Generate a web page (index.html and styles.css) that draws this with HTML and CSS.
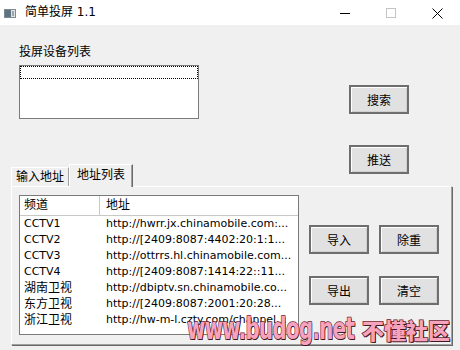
FILE: index.html
```html
<!DOCTYPE html>
<html lang="zh-CN">
<head>
    <meta charset="UTF-8">
    <meta name="viewport" content="width=device-width, initial-scale=1.0">
    <title>简单投屏 1.1</title>
    <link rel="stylesheet" href="styles.css">
</head>
<body>
    <div class="window">
        <div class="titlebar">
            <svg class="app-icon" width="12" height="9" viewBox="0 0 12 9">
                <rect x="0.5" y="0.5" width="11" height="8" fill="#dfe3e6" stroke="#7f8b93"/>
                <rect x="1" y="1" width="6" height="7" fill="#5d7480"/>
                <rect x="8" y="2" width="2" height="5" fill="#9aa7ae"/>
            </svg>
            <span class="title">简单投屏 1.1</span>
            <div class="controls">
                <span class="ctl">
                    <svg width="10" height="10" viewBox="0 0 10 10"><path d="M0 5.5h10" stroke="#000" stroke-width="1"/></svg>
                </span>
                <span class="ctl">
                    <svg width="10" height="10" viewBox="0 0 10 10"><rect x="0.5" y="0.5" width="9" height="9" fill="none" stroke="#c4c4c4"/></svg>
                </span>
                <span class="ctl">
                    <svg width="11" height="11" viewBox="0 0 11 11"><path d="M0.5 0.5l10 10M10.5 0.5l-10 10" stroke="#000" stroke-width="1"/></svg>
                </span>
            </div>
        </div>

        <div class="client">
            <div class="top">
                <div class="devices">
                    <div class="label">投屏设备列表</div>
                    <div class="listbox">
                        <div class="focus-row"></div>
                    </div>
                </div>
                <div class="side-buttons">
                    <button class="btn">搜索</button>
                    <button class="btn">推送</button>
                </div>
            </div>

            <div class="tabs">
                <div class="tab-strip">
                    <div class="tab">输入地址</div>
                    <div class="tab active">地址列表</div>
                </div>
                <div class="tab-panel">
                    <div class="listview">
                        <div class="lv-head">
                            <div class="col-name">频道</div>
                            <div class="col-url">地址</div>
                        </div>
                        <div id="rows" class="lv-body">
                            <!-- rows are added by the script below -->
                        </div>
                    </div>
                    <div class="panel-buttons">
                        <button class="btn">导入</button>
                        <button class="btn">除重</button>
                        <button class="btn">导出</button>
                        <button class="btn">清空</button>
                    </div>
                </div>
            </div>
        </div>

        <div class="watermark">
            <div class="wm-url-box"><span class="wm-url">www.budog.net</span></div>
            <span class="wm-cn">不懂社区</span>
        </div>
    </div>

    <script>
        const channels = [
            ['CCTV1', 'http://hwrr.jx.chinamobile.com:...'],
            ['CCTV2', 'http://[2409:8087:4402:20:1:1...'],
            ['CCTV3', 'http://ottrrs.hl.chinamobile.com...'],
            ['CCTV4', 'http://[2409:8087:1414:22::11...'],
            ['湖南卫视', 'http://dbiptv.sn.chinamobile.co...'],
            ['东方卫视', 'http://[2409:8087:2001:20:28...'],
            ['浙江卫视', 'http://hw-m-l.czty.com/channel...']
        ];

        const rows = document.getElementById('rows');
        channels.forEach(([name, url]) => {
            const row = document.createElement('div');
            row.classList.add('lv-row');
            const cn = /^[A-Z0-9]+$/.test(name) ? '' : ' cn';
            row.innerHTML = `
                <div class="col-name${cn}">${name}</div>
                <div class="col-url">${url}</div>
            `;
            rows.appendChild(row);
        });
    </script>
</body>
</html>
```

FILE: styles.css
```css
body {
    margin: 0;
    padding: 0;
    font-family: "DejaVu Sans", "Noto Sans CJK SC", sans-serif;
    font-size: 12px;
    color: #000;
    background: #f0f0f0;
}
.window {
    position: relative;
    width: 460px;
    height: 350px;
    overflow: hidden;
    background: #f0f0f0;
}
.titlebar {
    display: flex;
    align-items: center;
    height: 25px;
    background: #fff;
}
.app-icon {
    margin: 1px 9px 0 4px;
}
.title {
    font-size: 12px;
    line-height: 14px;
    margin-top: -1px;
}
.controls {
    display: flex;
    margin-left: auto;
    height: 25px;
}
.ctl {
    display: flex;
    align-items: center;
    justify-content: center;
    width: 46px;
    height: 25px;
    padding-top: 1px;
    box-sizing: border-box;
}
.client {
    padding-top: 20px;
}
.top {
    display: flex;
    align-items: flex-start;
    height: 119px;
    padding-left: 19px;
}
.devices {
    width: 180px;
}
.label {
    line-height: 14px;
    margin-bottom: 6px;
}
.listbox {
    height: 54px;
    box-sizing: border-box;
    border: 1px solid #7a7a7a;
    background: #fff;
}
.focus-row {
    height: 13px;
    border: 1px dotted #000;
    box-sizing: border-box;
}
.side-buttons {
    display: flex;
    flex-direction: column;
    gap: 31px;
    margin-left: 150px;
    padding-top: 40px;
}
.btn {
    width: 60px;
    height: 29px;
    padding: 0;
    border: 2px solid #6e6e6e;
    background: #e1e1e1;
    box-shadow: inset 1px 1px 0 #fff, inset -1px -1px 0 #cfcfcf;
    font-family: "Noto Sans CJK SC", sans-serif;
    font-size: 12px;
    line-height: 14px;
    color: #000;
}
.tabs {
    margin-left: 11px;
    width: 441px;
}
.tab-strip {
    display: flex;
    align-items: flex-end;
    height: 22px;
}
.tab {
    box-sizing: border-box;
    width: 58px;
    height: 19px;
    border-top: 1px solid #fff;
    border-left: 1px solid #fff;
    border-right: 1px solid #a0a0a0;
    text-align: center;
    line-height: 18px;
    font-size: 12px;
}
.tab.active {
    position: relative;
    z-index: 1;
    width: 64px;
    height: 23px;
    margin-bottom: -1px;
    line-height: 20px;
    background: #f0f0f0;
    border-right: 1px solid #696969;
    box-shadow: inset -1px 0 0 #a0a0a0;
}
.tab-panel {
    display: flex;
    align-items: flex-start;
    box-sizing: border-box;
    height: 159px;
    padding: 8px 0 0 7px;
    border-top: 1px solid #fff;
    border-left: 1px solid #fff;
    border-right: 1px solid #a0a0a0;
    border-bottom: 1px solid #a0a0a0;
    box-shadow: 1px 1px 0 #696969;
}
.listview {
    box-sizing: border-box;
    width: 280px;
    height: 140px;
    border: 1px solid #7a7a7a;
    background: #fff;
}
.lv-head {
    display: flex;
    height: 20px;
    box-sizing: border-box;
    border-bottom: 1px solid #c8c8c8;
    line-height: 19px;
    font-size: 12px;
}
.lv-head .col-name {
    border-right: 1px solid #c8c8c8;
}
.col-name {
    box-sizing: border-box;
    width: 80px;
    padding-left: 4px;
    white-space: nowrap;
}
.col-url {
    padding-left: 6px;
    white-space: nowrap;
    overflow: hidden;
}
.lv-row {
    display: flex;
    height: 16px;
    line-height: 16px;
    font-size: 11px;
}
.lv-row .col-name.cn {
    font-size: 12px;
}
.panel-buttons {
    display: grid;
    grid-template-columns: 60px 60px;
    column-gap: 10px;
    row-gap: 22px;
    margin-left: 10px;
    padding-top: 30px;
}
.watermark {
    position: absolute;
    left: 187px;
    top: 313px;
    display: flex;
    align-items: baseline;
    pointer-events: none;
}
.wm-url-box {
    width: 175px;
    white-space: nowrap;
}
.wm-url,
.wm-cn {
    color: #f7a3bd;
    -webkit-text-stroke: 1.5px #6b2233;
    paint-order: stroke fill;
    text-shadow: 1px 1px 0 #3a1a20;
    font-weight: 900;
}
.wm-url {
    display: inline-block;
    font-family: "DejaVu Sans", sans-serif;
    font-size: 30px;
    line-height: 32px;
    letter-spacing: -1px;
    transform: scaleX(0.66);
    transform-origin: left center;
}
.wm-cn {
    font-family: "Noto Sans CJK SC", sans-serif;
    font-size: 22px;
    line-height: 28px;
}
```
